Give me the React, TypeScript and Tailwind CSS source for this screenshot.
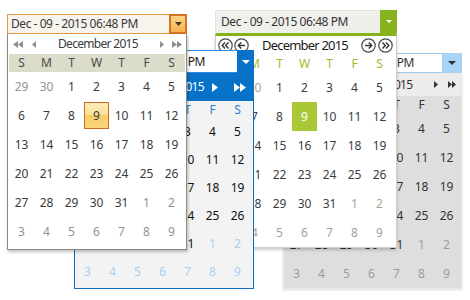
import React from 'react'

type Day = { n: number; other: boolean }

// December 2015, weeks starting on Sunday
const weeks: Day[][] = (() => {
    const rows: Day[][] = []
    let n = 29
    let other = true
    for (let r = 0; r < 6; r++) {
        const row: Day[] = []
        for (let c = 0; c < 7; c++) {
            row.push({ n, other })
            n++
            if (r === 0 && other && n === 31) {
                n = 1
                other = false
            } else if (!other && n === 32) {
                n = 1
                other = true
            }
        }
        rows.push(row)
    }
    return rows
})()

const dayNames = ['S', 'M', 'T', 'W', 'T', 'F', 'S']
const value = 'Dec - 09 - 2015 06:48 PM'

const Tri = ({ d, w, h }: { d: 'l' | 'r' | 'd'; w: number; h: number }) => {
    const pts =
        d === 'l'
            ? `${w},0 ${w},${h} 0,${h / 2}`
            : d === 'r'
              ? `0,0 0,${h} ${w},${h / 2}`
              : `0,0 ${w},0 ${w / 2},${h}`
    return (
        <svg width={w} height={h} className="block shrink-0">
            <polygon points={pts} fill="currentColor" />
        </svg>
    )
}

const Tri2 = ({ d, w, h }: { d: 'l' | 'r'; w: number; h: number }) => (
    <span className="flex shrink-0">
        <Tri d={d} w={w} h={h} />
        <Tri d={d} w={w} h={h} />
    </span>
)

const Circ = ({ kind }: { kind: 'll' | 'l' | 'r' | 'rr' }) => (
    <svg width="15" height="15" viewBox="0 0 15 15" className="block shrink-0">
        <circle cx="7.5" cy="7.5" r="6.7" fill="none" stroke="#4b4b4b" strokeWidth="1.2" />
        {kind === 'l' && (
            <g fill="none" stroke="#333" strokeWidth="1.4">
                <line x1="11" y1="7.5" x2="4.3" y2="7.5" />
                <polyline points="7.3,4.5 4.3,7.5 7.3,10.5" />
            </g>
        )}
        {kind === 'r' && (
            <g fill="none" stroke="#333" strokeWidth="1.4">
                <line x1="4" y1="7.5" x2="10.7" y2="7.5" />
                <polyline points="7.7,4.5 10.7,7.5 7.7,10.5" />
            </g>
        )}
        {kind === 'll' && (
            <g fill="none" stroke="#333" strokeWidth="1.4">
                <polyline points="7,4.5 4.2,7.5 7,10.5" />
                <polyline points="10.5,4.5 7.7,7.5 10.5,10.5" />
            </g>
        )}
        {kind === 'rr' && (
            <g fill="none" stroke="#333" strokeWidth="1.4">
                <polyline points="4.5,4.5 7.3,7.5 4.5,10.5" />
                <polyline points="8,4.5 10.8,7.5 8,10.5" />
            </g>
        )}
    </svg>
)

const OrangePicker = () => (
    <div className="absolute left-[7px] top-[14px] z-40 w-[180px]">
        <div className="flex h-[20px] border border-[#e39b41] bg-[#f6f4ec]">
            <span className="flex-1 whitespace-nowrap pl-[3px] leading-[18px] tracking-[-0.45px] text-[#3a3a3a]">
                {value}
            </span>
            <span className="-my-px -mr-px flex w-[18px] items-center justify-center border-2 border-[#d5761f] bg-[linear-gradient(#fbd48a,#f6b24e)] text-[#4a3a20]">
                <Tri d="d" w={7} h={4} />
            </span>
        </div>
        <div className="h-[216px] border border-t-0 border-[#8b8b83] bg-white shadow-[1px_2px_3px_rgba(0,0,0,0.25)]">
            <div className="flex h-[20px] items-center pl-[5px] pr-[4px] text-[#8e8e8e]">
                <Tri2 d="l" w={5} h={7} />
                <span className="ml-[9px]">
                    <Tri d="l" w={4} h={7} />
                </span>
                <span className="flex-1 text-center tracking-[-0.7px] text-[#3a3a3a]">December 2015</span>
                <Tri d="r" w={4} h={7} />
                <span className="ml-[8px]">
                    <Tri2 d="r" w={5} h={7} />
                </span>
            </div>
            <div className="mx-px grid h-[18px] grid-cols-[repeat(7,25px)] items-center bg-[#dcdccb] text-center text-[#4a4a4a]">
                {dayNames.map((d, i) => (
                    <span key={i}>{d}</span>
                ))}
            </div>
            <div className="grid auto-rows-[29px] grid-cols-[repeat(7,25px)] pl-px">
                {weeks.flat().map((d, i) =>
                    !d.other && d.n === 9 ? (
                        <span
                            key={i}
                            className="my-px flex items-center justify-center border border-[#d06a1e] bg-[linear-gradient(#fdecbb,#fcdf95_50%,#f8cd66_50%,#f9d67c)] text-[#3a3a3a]"
                        >
                            {d.n}
                        </span>
                    ) : (
                        <span
                            key={i}
                            className={`flex items-center justify-center ${d.other ? 'text-[#929292]' : 'text-[#3a3a3a]'}`}
                        >
                            {d.n}
                        </span>
                    ),
                )}
            </div>
        </div>
    </div>
)

const BluePicker = () => (
    <div className="absolute left-[74px] top-[50px] z-30 w-[180px]">
        <div className="flex h-[23px] border border-[#2f8be0] bg-white">
            <span className="flex-1 whitespace-nowrap pl-[3px] leading-[21px] tracking-[-0.45px] text-[#1a1a1a]">
                {value}
            </span>
            <span className="-my-px -mr-px flex w-[17px] items-center justify-center bg-[#0a71c8] text-white">
                <Tri d="d" w={8} h={4} />
            </span>
        </div>
        <div className="h-[216px] border border-t-0 border-[#0b6fc1] bg-[#f3f3f3]">
            <div className="flex h-[28px] items-center bg-[#0672c8] pl-[7px] pr-[7px] text-white">
                <Tri2 d="l" w={6} h={9} />
                <span className="ml-[16px]">
                    <Tri d="l" w={6} h={9} />
                </span>
                <span className="flex-1 text-center tracking-[-0.7px]">December 2015</span>
                <Tri d="r" w={6} h={9} />
                <span className="ml-[16px]">
                    <Tri2 d="r" w={6} h={9} />
                </span>
            </div>
            <div className="grid h-[17px] grid-cols-[repeat(7,25px)] items-center text-center text-[#2f7fd2]">
                {dayNames.map((d, i) => (
                    <span key={i}>{d}</span>
                ))}
            </div>
            <div className="grid auto-rows-[28px] grid-cols-[repeat(7,25px)]">
                {weeks.flat().map((d, i) => (
                    <span
                        key={i}
                        className={`flex items-center justify-center ${d.other ? 'text-[#a9d0f1]' : 'text-[#111111]'}`}
                    >
                        {d.n}
                    </span>
                ))}
            </div>
        </div>
    </div>
)

const GreenPicker = () => (
    <div className="absolute left-[215px] top-[10px] z-20 w-[182px]">
        <div className="flex h-[26px] border border-b-[3px] border-[#e2e4de] border-b-[#86b31b] bg-[#eff0ec]">
            <span className="flex-1 whitespace-nowrap pl-[5px] leading-[22px] tracking-[-0.45px] text-[#333333]">
                {value}
            </span>
            <span className="-mr-px -mt-px flex w-[17px] items-center justify-center bg-[#86b31b] text-white">
                <Tri d="d" w={6} h={3} />
            </span>
        </div>
        <div className="h-[212px] border border-t-0 border-[#cfcfcf] bg-white shadow-[0_2px_3px_rgba(0,0,0,0.2)]">
            <div className="flex h-[19px] items-center pl-[2px] pr-[3px]">
                <Circ kind="ll" />
                <span className="ml-px">
                    <Circ kind="l" />
                </span>
                <span className="flex-1 text-center text-[13px] tracking-[-0.8px] text-[#1a1a1a]">December 2015</span>
                <Circ kind="r" />
                <span className="ml-[2px]">
                    <Circ kind="rr" />
                </span>
            </div>
            <div className="grid h-[18px] grid-cols-[repeat(7,25px)] items-center pl-px text-center text-[#9cbd2b]">
                {dayNames.map((d, i) => (
                    <span key={i}>{d}</span>
                ))}
            </div>
            <div className="grid auto-rows-[29px] grid-cols-[repeat(7,25px)] pl-px">
                {weeks.flat().map((d, i) =>
                    !d.other && d.n === 9 ? (
                        <span key={i} className="flex items-center justify-center bg-[#a8c935] text-white">
                            {d.n}
                        </span>
                    ) : (
                        <span
                            key={i}
                            className={`flex items-center justify-center ${d.other ? 'text-[#aaa28e]' : 'text-[#3b3d44]'}`}
                        >
                            {d.n}
                        </span>
                    ),
                )}
            </div>
        </div>
    </div>
)

const GrayPicker = () => (
    <div className="absolute left-[283px] top-[53px] z-10 w-[179px]">
        <div className="flex h-[20px] border border-[#9bcaf0] bg-white">
            <span className="flex-1 whitespace-nowrap pl-[3px] leading-[18px] tracking-[-0.45px] text-[#333333]">
                {value}
            </span>
            <span className="-my-px -mr-px flex w-[20px] items-center justify-center bg-[#a9d4f5] text-[#333333]">
                <Tri d="d" w={8} h={4} />
            </span>
        </div>
        <div className="h-[216px] border border-t-0 border-[#e9e9e9] bg-[#dedede] shadow-[0_1px_2px_rgba(0,0,0,0.15)]">
            <div className="flex h-[23px] items-center bg-[#ececec] pl-[5px] pr-[5px] text-[#333333]">
                <Tri2 d="l" w={4} h={7} />
                <span className="ml-[10px]">
                    <Tri d="l" w={4} h={7} />
                </span>
                <span className="flex-1 text-center tracking-[-0.7px]">December 2015</span>
                <Tri d="r" w={4} h={7} />
                <span className="ml-[10px]">
                    <Tri2 d="r" w={4} h={7} />
                </span>
            </div>
            <div className="grid h-[18px] grid-cols-[repeat(7,25px)] items-center text-center text-[#333333]">
                {dayNames.map((d, i) => (
                    <span key={i}>{d}</span>
                ))}
            </div>
            <div className="grid auto-rows-[29px] grid-cols-[repeat(7,25px)]">
                {weeks.flat().map((d, i) => (
                    <span
                        key={i}
                        className={`flex items-center justify-center ${d.other ? 'text-[#9c9c9c]' : 'text-[#333333]'}`}
                    >
                        {d.n}
                    </span>
                ))}
            </div>
        </div>
    </div>
)

export default function App() {
    return (
        <div className="relative h-[300px] w-[470px] overflow-hidden bg-white font-['Noto_Sans',sans-serif] text-[12px]">
            <GrayPicker />
            <GreenPicker />
            <BluePicker />
            <OrangePicker />
        </div>
    )
}
